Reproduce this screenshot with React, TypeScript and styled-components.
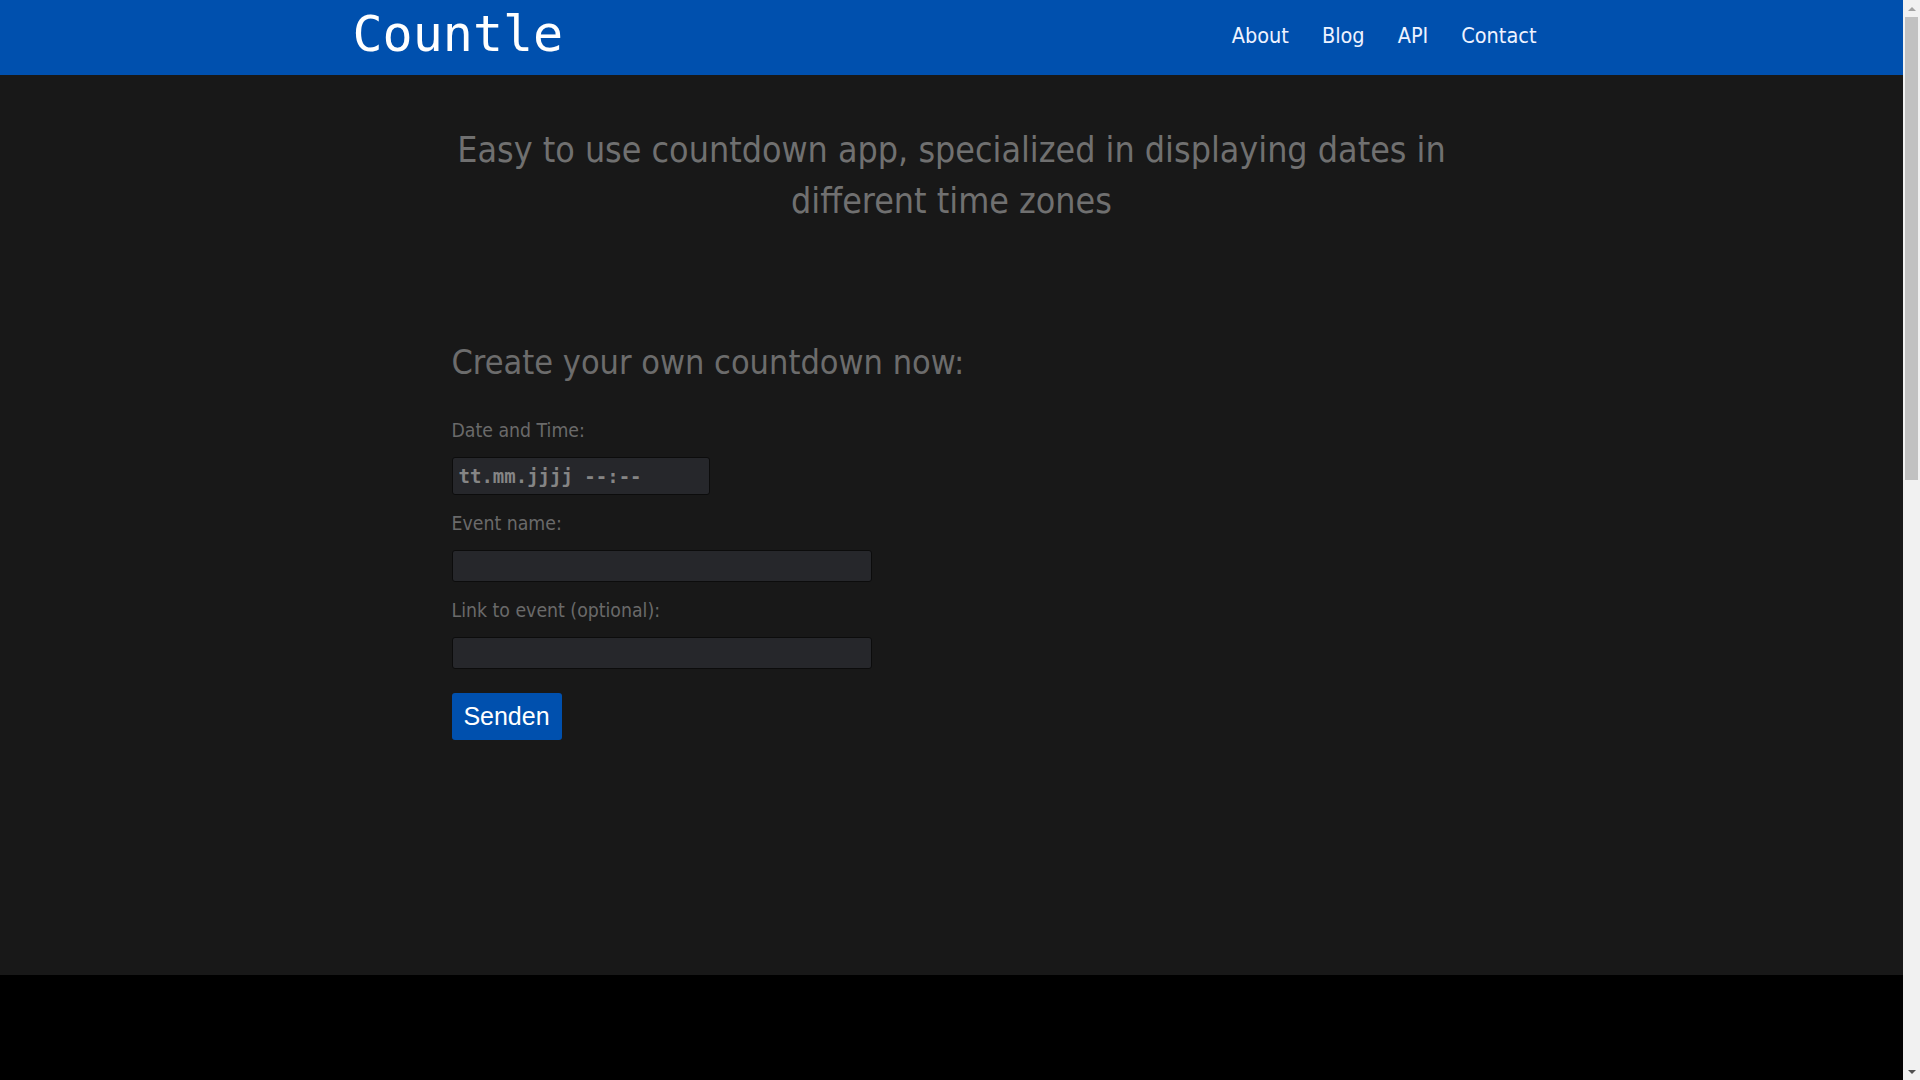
import { createGlobalStyle } from "styled-components";
import styled from "styled-components";

const GlobalStyle = createGlobalStyle`
  body {
    margin: 0;
    background: #000;
    font-family: "DejaVu Sans Condensed", "DejaVu Sans", sans-serif;
    font-stretch: condensed;
  }
`;

// the page was shot with a classic 17px scrollbar on the right
const Page = styled.div`
  margin-right: 17px;
`;

const ScrollTrack = styled.div`
  position: fixed;
  top: 0;
  right: 0;
  width: 17px;
  height: 100vh;
  background: #f1f1f1;
  display: flex;
  flex-direction: column;
  align-items: center;
`;

const Arrow = styled.div<{ $down?: boolean }>`
  height: 17px;
  width: 17px;
  display: flex;
  align-items: center;
  justify-content: center;

  &::before {
    content: "";
    border-left: 4px solid transparent;
    border-right: 4px solid transparent;
    ${(p) =>
      p.$down
        ? "border-top: 4px solid #505050;"
        : "border-bottom: 4px solid #a3a3a3;"}
  }
`;

const Thumb = styled.div`
  width: 13px;
  height: 463px;
  background: #c1c1c1;
`;

const Spacer = styled.div`
  flex: 1;
`;

const Header = styled.header`
  background: #0050ae;
  height: 75px;
`;

const HeaderInner = styled.div`
  width: 1170px;
  margin: 0 auto;
  height: 100%;
  display: flex;
  align-items: center;
  justify-content: space-between;
`;

const Logo = styled.a`
  margin-left: -14px;
  margin-top: -8px;
  font-family: "DejaVu Sans Mono", monospace;
  font-stretch: normal;
  font-size: 50px;
  color: #fff;
  text-decoration: none;
`;

const Nav = styled.nav`
  display: flex;
  gap: 33px;
  margin-top: -5px;
`;

const NavLink = styled.a`
  color: #eef2ff;
  font-size: 21.5px;
  text-decoration: none;
`;

const Main = styled.main`
  background: #181818;
  height: 900px;
`;

const Content = styled.div`
  width: 1000px;
  margin: 0 auto;
  padding-top: 49px;
`;

const Hero = styled.p`
  margin: 0;
  text-align: center;
  color: #707070;
  font-size: 35.5px;
  font-weight: 300;
  line-height: 51px;
`;

const Heading = styled.h2`
  margin: 112px 0 0;
  color: #6c6c6c;
  font-size: 34px;
  font-weight: normal;
  line-height: 48px;
`;

const Form = styled.form`
  display: flex;
  flex-direction: column;
  align-items: flex-start;
  margin-top: 32px;
`;

const Label = styled.label`
  color: #6a6a6a;
  font-size: 19.3px;
  line-height: 26px;
  margin-bottom: 13px;
`;

const Input = styled.input<{ $w: number; $h: number }>`
  box-sizing: border-box;
  width: ${(p) => p.$w}px;
  height: ${(p) => p.$h}px;
  background: #26272b;
  border: 1px solid #0c0c0c;
  border-radius: 3px;
  margin: 0 0 16px;
  padding: 0 6px;
  color: #858585;
  font-family: "DejaVu Sans Mono", monospace;
  font-stretch: normal;
  font-size: 19px;
  font-weight: bold;
  outline: none;

  &::placeholder {
    color: #858585;
  }
`;

const Button = styled.button`
  margin-top: 8px;
  width: 110px;
  height: 47px;
  background: #0050ae;
  color: #fff;
  border: none;
  border-radius: 3px;
  font-family: "Liberation Sans", Arial, sans-serif;
  font-stretch: normal;
  font-size: 25px;
  padding: 0;
  cursor: pointer;
`;

const Footer = styled.footer`
  background: #000;
  height: 1465px;
`;

export default function App() {
  return (
    <>
      <GlobalStyle />
      <Page>
        <Header>
          <HeaderInner>
            <Logo href="#">Countle</Logo>
            <Nav>
              <NavLink href="#">About</NavLink>
              <NavLink href="#">Blog</NavLink>
              <NavLink href="#">API</NavLink>
              <NavLink href="#">Contact</NavLink>
            </Nav>
          </HeaderInner>
        </Header>
        <Main>
          <Content>
            <Hero>
              Easy to use countdown app, specialized in displaying dates in
              <br />
              different time zones
            </Hero>
            <Heading>Create your own countdown now:</Heading>
            <Form onSubmit={(e) => e.preventDefault()}>
              <Label>Date and Time:</Label>
              <Input $w={258} $h={38} placeholder="tt.mm.jjjj --:--" />
              <Label>Event name:</Label>
              <Input $w={420} $h={32} />
              <Label>Link to event (optional):</Label>
              <Input $w={420} $h={32} />
              <Button type="submit">Senden</Button>
            </Form>
          </Content>
        </Main>
        <Footer />
      </Page>
      <ScrollTrack>
        <Arrow />
        <Thumb />
        <Spacer />
        <Arrow $down />
      </ScrollTrack>
    </>
  );
}
